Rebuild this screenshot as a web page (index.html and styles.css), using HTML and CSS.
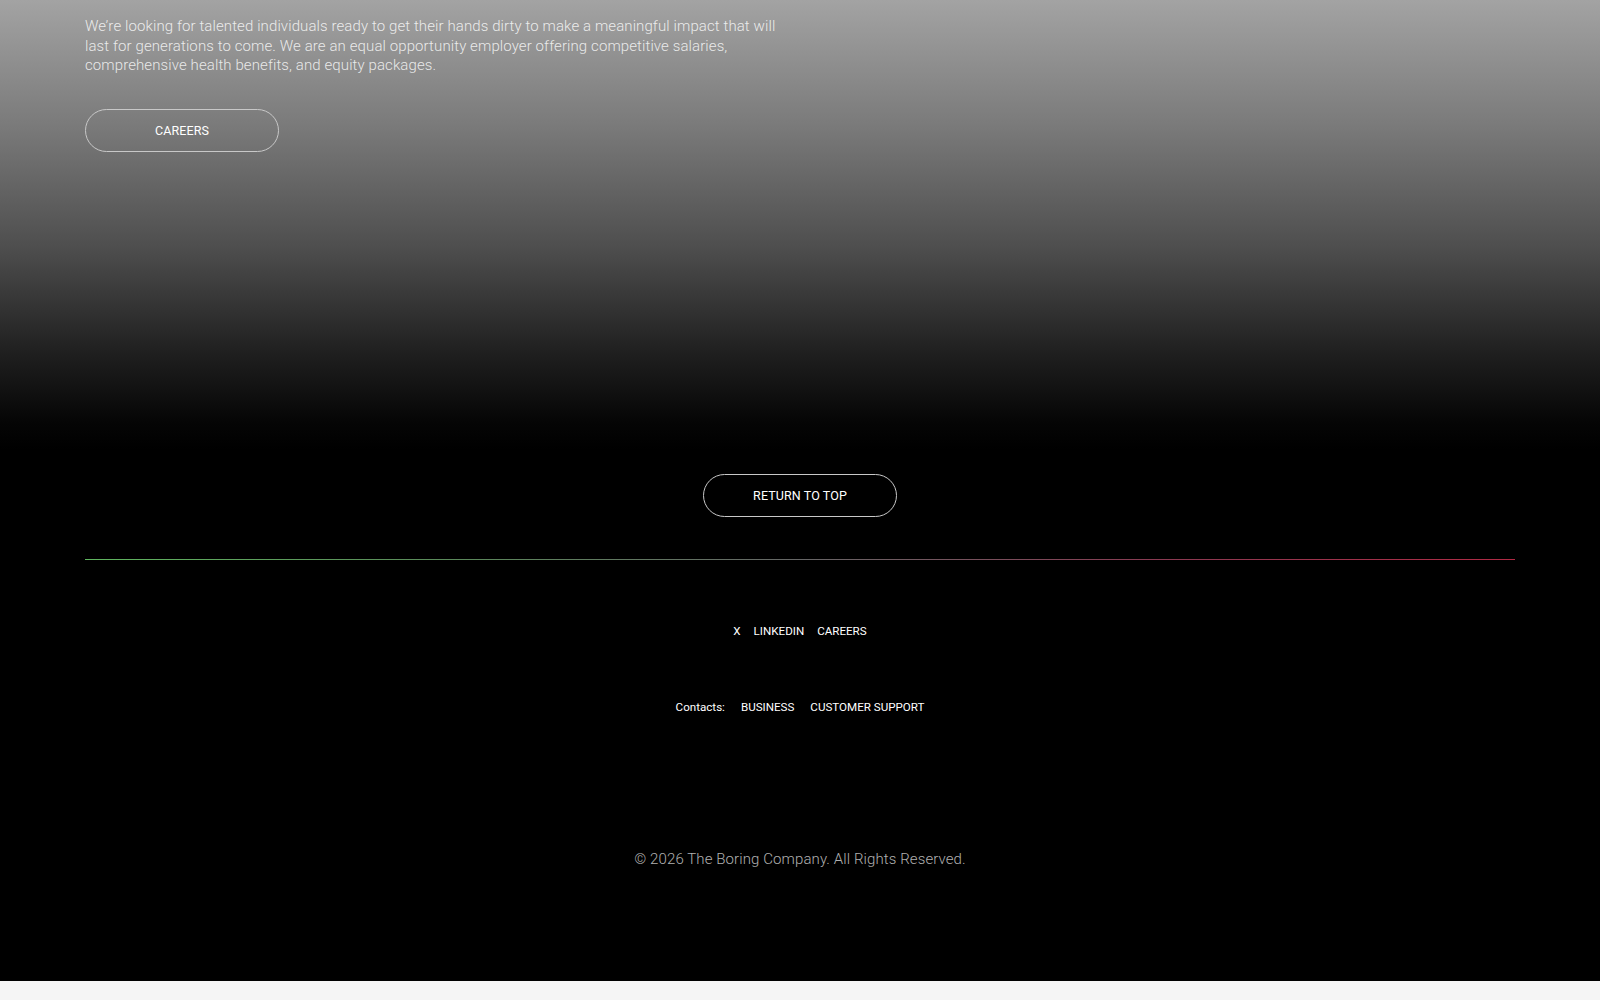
FILE: index.html
```html
<!DOCTYPE html>
<html lang="en">
<head>
<meta charset="utf-8">
<title>The Boring Company</title>
<link rel="stylesheet" href="styles.css">
</head>
<body>
<div class="page">
  <section class="hero">
    <p class="hero-text">We’re looking for talented individuals ready to get their hands dirty to make a meaningful impact that will last for generations to come. We are an equal opportunity employer offering competitive salaries, comprehensive health benefits, and equity packages.</p>
    <a class="pill" href="#">CAREERS</a>
  </section>
  <footer class="footer">
    <a class="pill" href="#">RETURN TO TOP</a>
    <div class="rule"></div>
    <nav class="social">
      <a href="#">X</a>
      <a href="#">LINKEDIN</a>
      <a href="#">CAREERS</a>
    </nav>
    <div class="contacts">
      <span class="label">Contacts:</span>
      <a href="#">BUSINESS</a>
      <a href="#">CUSTOMER SUPPORT</a>
    </div>
    <p class="copyright">© 2026 The Boring Company. All Rights Reserved.</p>
  </footer>
</div>
<div class="bottom-bar"></div>
</body>
</html>
```

FILE: styles.css
```css
html, body {
  margin: 0;
  padding: 0;
}
body {
  background: #f5f5f5;
  font-family: Roboto, "Liberation Sans", sans-serif;
  color: #fff;
}
a {
  color: #fff;
  text-decoration: none;
}
.page {
  background: #000;
  height: 981px;
  display: flex;
  flex-direction: column;
}
.hero {
  height: 450px;
  box-sizing: border-box;
  padding: 17px 85px 0;
  background: linear-gradient(to bottom, #a3a3a3 0%, #7a7a7a 28%, #4e4e4e 55%, #202020 78%, #050505 94%, #000 100%);
}
.hero-text {
  margin: 0;
  width: 702px;
  font-size: 15px;
  font-weight: 300;
  line-height: 19.5px;
  color: rgba(255,255,255,0.82);
  letter-spacing: 0.1px;
}
.pill {
  display: flex;
  align-items: center;
  justify-content: center;
  width: 194px;
  height: 43px;
  box-sizing: border-box;
  border: 1.3px solid #c8c8c8;
  border-radius: 22px;
  font-size: 12.5px;
  font-weight: 400;
  letter-spacing: 0.1px;
  color: #fff;
}
.hero .pill {
  margin-top: 33px;
}
.footer {
  display: flex;
  flex-direction: column;
  align-items: center;
  padding: 24px 85px 0;
}
.rule {
  align-self: stretch;
  height: 1px;
  margin-top: 42px;
  background: linear-gradient(to right, #5fb55f 0%, #5a8a5a 25%, #666 50%, #8a3a52 75%, #b02a44 100%);
}
.social {
  margin-top: 63px;
  display: flex;
  gap: 13px;
  font-size: 11.6px;
  line-height: 16px;
  color: #f2f2f2;
}
.contacts {
  margin-top: 60px;
  display: flex;
  gap: 16px;
  font-size: 11.6px;
  line-height: 16px;
}
.contacts .label {
  color: #fff;
}
.copyright {
  margin: 134px 0 0;
  font-size: 15px;
  font-weight: 300;
  line-height: 20px;
  color: #b0b0b0;
  letter-spacing: 0.1px;
}
.bottom-bar {
  height: 19px;
  background: #f5f5f5;
}
```
